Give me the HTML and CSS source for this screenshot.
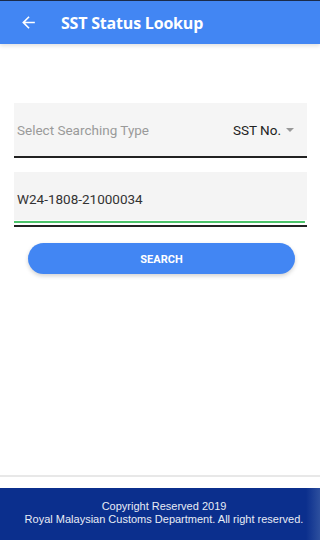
FILE: index.html
```html
<!DOCTYPE html>
<html>
<head>
<meta charset="utf-8">
<link rel="stylesheet" href="styles.css">
</head>
<body>
<div class="app">
  <header class="topbar">
    <svg class="back" width="19" height="19" viewBox="0 0 24 24"><path d="M20 11H7.83l5.59-5.59L12 4l-8 8 8 8 1.41-1.41L7.83 13H20v-2z" fill="#fff"/></svg>
    <h1 class="title">SST Status Lookup</h1>
  </header>
  <main class="content">
    <div class="field select-field">
      <span class="placeholder">Select Searching Type</span>
      <span class="value">SST No.<span class="caret"></span></span>
    </div>
    <div class="field input-field">
      <span class="input-text">W24-1808-21000034</span>
    </div>
    <button class="search-btn">SEARCH</button>
  </main>
  <footer class="footer">
    <div>Copyright Reserved 2019</div>
    <div>Royal Malaysian Customs Department. All right reserved.</div>
  </footer>
</div>
</body>
</html>
```
FILE: styles.css
```css
html, body {
  margin: 0;
  padding: 0;
  background: #fff;
}
.app {
  width: 320px;
  height: 540px;
  display: flex;
  flex-direction: column;
  font-family: Roboto, "Liberation Sans", sans-serif;
}
.topbar {
  height: 43px;
  background: #4286f3;
  border-top: 1px solid #1a2b4a;
  display: flex;
  align-items: center;
  box-shadow: 0 2px 4px rgba(0,0,0,0.12);
  flex-shrink: 0;
}
.back {
  margin-left: 19px;
  margin-top: -1px;
}
.title {
  margin: 0 0 0 23px;
  color: #fff;
  font-family: "Open Sans", "Liberation Sans", sans-serif;
  font-weight: 700;
  font-size: 16px;
  letter-spacing: -0.2px;
}
.content {
  flex: 1;
  display: flex;
  flex-direction: column;
  padding: 59px 13px 0 14px;
}
.field {
  background: #f5f5f5;
  display: flex;
  align-items: center;
  box-sizing: border-box;
}
.select-field {
  height: 55px;
  border-bottom: 2px solid #222;
  padding: 0 13px 0 3px;
  justify-content: space-between;
}
.placeholder {
  color: #9a9a9a;
  font-size: 13.5px;
}
.value {
  color: #222;
  font-size: 13.5px;
  display: flex;
  align-items: center;
}
.caret {
  width: 0;
  height: 0;
  border-left: 4px solid transparent;
  border-right: 4px solid transparent;
  border-top: 4px solid #999;
  margin-left: 5px;
}
.input-field {
  margin-top: 14px;
  height: 55px;
  padding: 0 3px;
  background: linear-gradient(#f4f4f4, #f4f4f4) top/100% 48px no-repeat,
              linear-gradient(#4cc36a, #4cc36a) 0 49px/99.3% 2px no-repeat;
  border-bottom: 2px solid #222;
  background-color: #fff;
}
.input-text {
  color: #333;
  font-size: 13.5px;
  margin-top: 1px;
}
.search-btn {
  margin: 16px 0 0 14px;
  width: 267px;
  height: 31px;
  border: none;
  border-radius: 16px;
  background: #4286f3;
  color: #fff;
  font-family: Roboto, "Liberation Sans", sans-serif;
  font-weight: 700;
  font-size: 11px;
  padding-top: 2px;
  box-shadow: 0 2px 4px rgba(0,0,0,0.18);
}
.footer {
  flex-shrink: 0;
  height: 52px;
  background: linear-gradient(to right, #0b2f8d 0, #0b2f8d 306px, #2d4f9e 320px);
  color: #e8ecf5;
  font-family: "Liberation Sans", Arial, sans-serif;
  font-size: 11px;
  line-height: 13px;
  display: flex;
  flex-direction: column;
  justify-content: center;
  align-items: center;
  padding: 0 0 2px 8px;
  box-sizing: border-box;
  box-shadow: 0 -11px 0 #fff, 0 -13px 0 #e8e8e8;
}
```
